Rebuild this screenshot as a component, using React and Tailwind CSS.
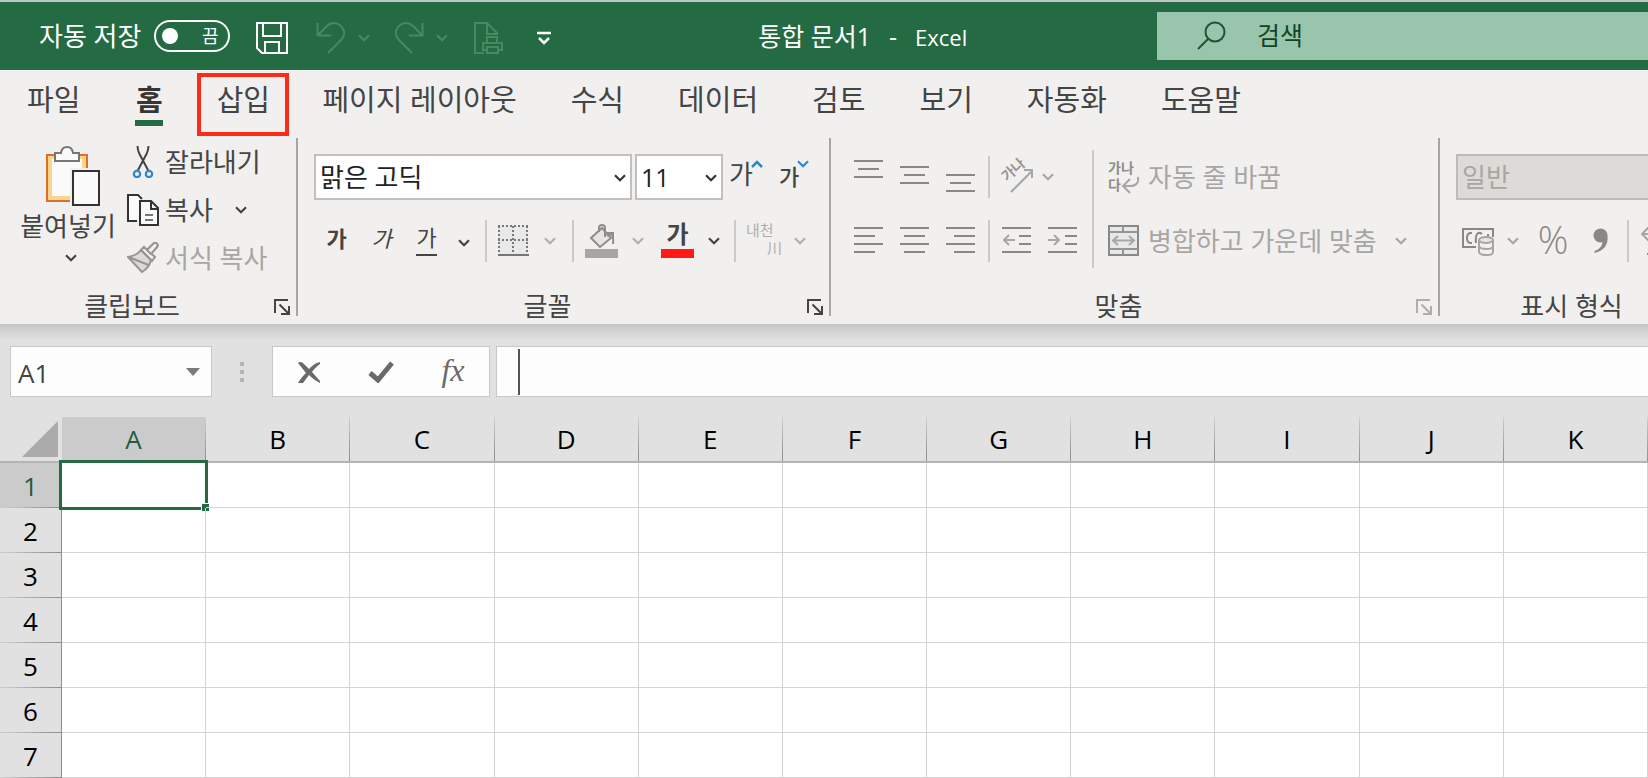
import React from 'react';

const columns = ['A', 'B', 'C', 'D', 'E', 'F', 'G', 'H', 'I', 'J', 'K'];
const rows = [1, 2, 3, 4, 5, 6, 7];
const tabs = ['파일', '홈', '삽입', '페이지 레이아웃', '수식', '데이터', '검토', '보기', '자동화', '도움말'];

const Chevron = ({ className = 'text-[#444]' }) => (
  <svg className={`shrink-0 ${className}`} width="12" height="8" viewBox="0 0 12 8" fill="none" stroke="currentColor" strokeWidth="2.2">
    <path d="M1 1.2l5 5 5-5" />
  </svg>
);

const Separator = ({ className = 'h-[42px]' }) => <span className={`w-0.5 shrink-0 bg-[#cccac8] ${className}`} />;

const Launcher = ({ className = 'text-[#444]', label }) => (
  <button aria-label={label} className={`mr-0.5 flex w-6 shrink-0 justify-center pt-0.5 ${className}`}>
    <svg width="16" height="16" viewBox="0 0 16 16" fill="none" stroke="currentColor" strokeWidth="2">
      <path d="M1 14V1h13M5.500 5.500l9 9M15 7v8H7" />
    </svg>
  </button>
);

const Group = ({ label, className = '', launcher, children }) => (
  <section aria-label={label} className={`flex h-[178px] shrink-0 flex-col border-r-2 border-[#a8a6a4] ${className}`}>
    <div className="flex-1">{children}</div>
    <div className="flex h-5 items-center">
      <span className="flex-1 pr-1.5 text-center leading-5 text-[#444]">{label}</span>
      {launcher}
    </div>
  </section>
);

// Horizontal strokes given as [x, y, length]
const Lines = ({ lines, height = 32, children }) => (
  <svg width="30" height={height} viewBox={`0 0 30 ${height}`} fill="none" stroke="#8a8886" strokeWidth="2">
    {lines.map(([x, y, w]) => (
      <path key={y} d={`M${x} ${y}h${w}`} />
    ))}
    {children}
  </svg>
);

const SaveIcon = () => (
  <svg width="32" height="32" viewBox="0 0 32 32" fill="none" stroke="white" strokeWidth="2">
    <path d="M1 1h30v30H6l-5-5zM7 1v13h18V1M9 31V20h14v11" />
  </svg>
);

const UndoIcon = () => (
  <svg width="30" height="32" viewBox="0 0 30 32" fill="none" stroke="currentColor" strokeWidth="2">
    <path d="M1.500 1v12.500H15M2 13L11 4c5-5 12-3 15 1 3 4 3 9-1 13L12 31" />
  </svg>
);

const RedoIcon = () => (
  <svg width="30" height="32" viewBox="0 0 30 32" fill="none" stroke="currentColor" strokeWidth="2">
    <path d="M28.500 1v12.500H15M28 13L19 4C14-1 7 1 4 5c-3 4-3 9 1 13l13 13" />
  </svg>
);

const PrintPreviewIcon = () => (
  <svg width="30" height="32" viewBox="0 0 30 32" fill="none" stroke="currentColor" strokeWidth="2">
    <path d="M10 31H1V1h12l10 10v2M13 1v11h10M13 21v-6h10v6M13 28H9v-7h19v7h-4M13 25h11v6H13z" />
  </svg>
);

const PasteIcon = () => (
  <svg width="54" height="60" viewBox="0 0 54 60" fill="none">
    <path d="M1 9h40v46H1z" fill="#f8d58c" stroke="#d9712b" strokeWidth="2" />
    <path d="M6 13h30v37H6z" fill="#fafafa" />
    <path d="M9 15V7h6c1-8 11-8 12 0h6v8z" fill="#fafafa" stroke="#767676" strokeWidth="2" />
    <path d="M24 22h30v38H24z" fill="#f1f0ef" />
    <path d="M27 25h26v34H27z" fill="#fafafa" stroke="#333" strokeWidth="2" />
  </svg>
);

const CutIcon = () => (
  <svg width="32" height="32" viewBox="0 0 32 32" fill="none" strokeWidth="2">
    <path d="M10.500 0c0 4 .5 5 2 8l9 17M21.500 0c0 4-.5 5-2 8l-9 17" stroke="#444" />
    <circle cx="10" cy="28" r="3.200" stroke="#2b88c9" strokeWidth="2.200" />
    <circle cx="22" cy="28" r="3.200" stroke="#2b88c9" strokeWidth="2.200" />
  </svg>
);

const CopyIcon = () => (
  <svg width="32" height="32" viewBox="0 0 32 32" fill="none" stroke="#333" strokeWidth="2">
    <path d="M10 27H1V1h10l4 4" fill="#fafafa" />
    <path d="M13 7h11l7 7v17H13z" fill="#fafafa" />
    <path d="M24 7v8h7" />
    <path d="M18 21h8M18 26h8" stroke="#777" />
  </svg>
);

const BrushIcon = () => (
  <svg width="32" height="32" viewBox="0 0 32 32" fill="none" stroke="#979593" strokeWidth="2">
    <path d="M1 15c6-1 10-3 13-7l10 10c-1 5-4 9-9 12z" fill="#dcdad8" />
    <path d="M1.500 15l20 8M14 8l3-3 11 10-3 4zM20 8l7-7c2-1 5 2 3 4l-7 7" />
    <path d="M20 8l7-7c2-1 5 2 3 4l-6 7z" fill="#f1f0ef" />
  </svg>
);

const BorderIcon = () => (
  <svg width="31" height="32" viewBox="0 0 31 32" fill="none" stroke="#777" strokeWidth="2">
    <path d="M1 1h29v29H1z" fill="#e9e9e9" stroke="none" />
    <path d="M0 1h31M0 15h31" strokeDasharray="2 2" />
    <path d="M1 1v27M15 1v27M29 1v27" strokeDasharray="2 2" />
    <path d="M0 30h31" />
  </svg>
);

const FillIcon = () => (
  <svg width="33" height="34" viewBox="0 0 33 34" fill="none" stroke="#8f8d8b" strokeWidth="2">
    <path d="M6 14L17 4l9 10-11 9z" fill="#e6e5e4" />
    <path d="M14 8V4c0-4 6-4 6 0v9M22 12c4-4 7-1 6 8M22 9h6v6" />
    <path d="M0 25h33v9H0z" fill="#a8a6a4" stroke="none" />
  </svg>
);

const OrientationIcon = () => (
  <svg className="overflow-visible" width="34" height="34" viewBox="0 0 34 34" fill="none" stroke="#a8a6a4" strokeWidth="2">
    <text x="0" y="0" transform="translate(7 22) rotate(-42)" fontSize="14" fontWeight="bold" fill="#979593" stroke="none">가나</text>
    <path d="M11 32L32 11M24 10h8v8" />
  </svg>
);

const WrapIcon = () => (
  <svg className="overflow-visible" width="32" height="34" viewBox="0 0 32 34" fill="none" stroke="#a8a6a4" strokeWidth="2">
    <text x="0" y="13" fontSize="14" fontWeight="bold" fill="#8f8d8b" stroke="none">가나</text>
    <text x="0" y="30" fontSize="14" fontWeight="bold" fill="#8f8d8b" stroke="none">다</text>
    <path d="M30 17c1 6-2 9-8 9h-6M22 19l-7 7 7 7" />
  </svg>
);

const MergeIcon = () => (
  <svg width="32" height="32" viewBox="0 0 32 32" fill="none" stroke="#8a8886" strokeWidth="2">
    <path d="M1 1h29v29H1z" fill="#e6e8ea" />
    <path d="M1 7h29M1 24h29M15 1v6M15 24v6" stroke="#979593" />
    <path d="M6 15.500h19M10 11l-5 4.500 5 4.500M21 11l5 4.500-5 4.500" stroke="#a8a6a4" />
  </svg>
);

const CurrencyIcon = () => (
  <svg width="33" height="30" viewBox="0 0 33 30" fill="none" stroke="#8a8886" strokeWidth="2">
    <path d="M14 21H1V3h30v8M10 7H8c-4 1-4 9 0 10h2M20 8c-4-3-7 0-6 9M26 8v3" />
    <path d="M17 14v12c1 4 14 4 14 0V14" fill="#f1f0ef" stroke="#a8a6a4" />
    <ellipse cx="24" cy="14" rx="7" ry="3" fill="#e6e5e4" stroke="#a8a6a4" />
    <path d="M17 20c1 4 14 4 14 0" stroke="#a8a6a4" />
  </svg>
);

const TitleBar = () => (
  <header className="flex h-[70px] items-center overflow-hidden border-t-2 border-[#c3c3c3] bg-[#246a42] text-white">
    <label htmlFor="autosave" className="ml-[39px] shrink-0">자동 저장</label>
    <span className="relative ml-[13px] h-8 w-[76px] shrink-0">
      <input id="autosave" type="checkbox" className="block h-8 w-[76px] appearance-none rounded-full border-2 border-white" />
      <span className="pointer-events-none absolute inset-0 flex items-center justify-between pr-3 pl-2">
        <span className="size-4 rounded-full bg-white" />
        <span className="text-lg leading-5">끔</span>
      </span>
    </span>
    <div className="ml-[26px] flex shrink-0 items-center pt-1 text-[#458a60]">
      <button aria-label="저장"><SaveIcon /></button>
      <button aria-label="실행 취소" className="ml-7 flex items-center gap-3"><UndoIcon /><Chevron className="text-[#458a60]" /></button>
      <button aria-label="다시 실행" className="ml-6 flex items-center gap-3"><RedoIcon /><Chevron className="text-[#458a60]" /></button>
      <button aria-label="인쇄 미리 보기" className="ml-[26px]"><PrintPreviewIcon /></button>
      <button aria-label="빠른 실행 도구 모음 사용자 지정" className="ml-8">
        <svg width="16" height="16" viewBox="0 0 16 16" fill="none" stroke="white" strokeWidth="2.500">
          <path d="M1 3h14M3 8l5 5 5-5" />
        </svg>
      </button>
    </div>
    <h1 className="flex min-w-0 flex-1 items-baseline justify-center gap-[18px] pt-0.5 pl-4 text-[25px] whitespace-nowrap">
      <span>통합 문서1</span>
      <span>-</span>
      <span className="text-[22px]">Excel</span>
    </h1>
    <div className="flex h-12 w-[491px] shrink-0 items-center bg-[#98c5ac] pl-10">
      <svg width="30" height="30" viewBox="0 0 30 30" fill="none" stroke="#1c5434" strokeWidth="2">
        <circle cx="18" cy="11" r="9.500" />
        <path d="M11 18L1 28" />
      </svg>
      <input aria-label="검색" placeholder="검색" className="ml-[30px] min-w-0 flex-1 bg-transparent text-[25px] outline-none placeholder:text-[#0f4526]" />
    </div>
  </header>
);

const Tabs = () => (
  <nav className="flex h-[68px] items-start overflow-hidden pt-[3px] text-[29px] text-[#444]">
    {tabs.map((tab) => {
      if (tab === '홈') {
        return (
          <a key={tab} href="#home" className="flex h-[53px] shrink-0 flex-col items-center px-7 font-bold text-[#3b3535]">
            <span className="h-[47px] leading-[54px]">{tab}</span>
            <span className="h-1.5 w-7 bg-[#246a42]" />
          </a>
        );
      }
      if (tab === '삽입') {
        return (
          <a key={tab} href="#insert" className="mx-1.5 h-[63px] w-[92px] shrink-0 border-4 border-[#ff2b1a] text-center leading-[46px]">{tab}</a>
        );
      }
      return (
        <a key={tab} href="#tab" className="shrink-0 px-[27px] leading-[54px]">{tab}</a>
      );
    })}
  </nav>
);

const ClipboardGroup = () => (
  <Group label="클립보드" className="w-[298px]" launcher={<Launcher label="클립보드 옵션" />}>
    <div className="flex pl-5">
      <button className="flex w-24 flex-col items-center pt-2 text-[#444]">
        <span className="pl-2.5"><PasteIcon /></span>
        <span className="mt-1 leading-8 whitespace-nowrap">붙여넣기</span>
        <span className="mt-3 pl-1.5"><Chevron /></span>
      </button>
      <div className="ml-[11px] flex flex-col gap-1 pt-0.5 text-[#444]">
        <button className="flex h-11 items-center gap-1.5"><CutIcon />잘라내기</button>
        <button className="flex h-11 items-center gap-1.5"><CopyIcon />복사<span className="ml-4"><Chevron /></span></button>
        <button className="flex h-11 items-center gap-1.5 text-[#a8a6a4]"><BrushIcon />서식 복사</button>
      </div>
    </div>
  </Group>
);

const FontGroup = () => (
  <Group label="글꼴" className="w-[533px]" launcher={<Launcher label="글꼴 옵션" />}>
    <div className="flex h-[62px] items-start pt-4 pl-4">
      <span className="relative">
        <select aria-label="글꼴" className="h-[46px] w-[318px] appearance-none border-2 border-[#c2c0be] bg-white pl-1 text-[#222]">
          <option>맑은 고딕</option>
        </select>
        <span className="pointer-events-none absolute top-5 right-1.5"><Chevron className="text-[#333]" /></span>
      </span>
      <span className="relative ml-[3px]">
        <select aria-label="글꼴 크기" className="h-[46px] w-[88px] appearance-none border-2 border-[#c2c0be] bg-white pt-0.5 pl-1 text-[25px] text-[#222]">
          <option>11</option>
        </select>
        <span className="pointer-events-none absolute top-5 right-1.5"><Chevron className="text-[#333]" /></span>
      </span>
      <button aria-label="글꼴 크기 크게" className="ml-1.5 flex items-start pt-1 text-[#444]">
        <span className="leading-8">가</span>
        <svg className="-ml-0.5 mt-0.5" width="12" height="8" viewBox="0 0 12 8" fill="none" stroke="#2b88c9" strokeWidth="2.500"><path d="M1 7l5-5 5 5" /></svg>
      </button>
      <button aria-label="글꼴 크기 작게" className="ml-4 flex items-start pt-1 text-[#444]">
        <span className="text-[22px] leading-9 font-medium">가</span>
        <span className="-ml-0.5 mt-0.5"><Chevron className="text-[#2b88c9]" /></span>
      </button>
    </div>
    <div className="mt-5 flex h-[42px] items-center pl-4 text-[#444]">
      <button className="h-9 w-[45px] pb-1.5 text-[22px] leading-7 font-bold">가</button>
      <button className="h-9 w-[45px] pb-1.5 text-[22px] leading-7 italic">가</button>
      <button className="flex h-9 w-[45px] justify-center text-[22px] leading-7"><span className="h-[33px] border-b-2 border-[#444]">가</span></button>
      <button aria-label="밑줄 옵션" className="mt-1 mr-[15px] ml-[9px]"><Chevron /></button>
      <Separator />
      <button aria-label="테두리" className="mr-4 ml-[11px] flex items-center gap-[15px]"><BorderIcon /><Chevron className="text-[#b0aeac]" /></button>
      <Separator />
      <button aria-label="채우기 색" className="ml-[11px] flex items-center gap-3.5"><FillIcon /><Chevron className="text-[#b0aeac]" /></button>
      <button aria-label="글꼴 색" className="mr-3.5 ml-[17px] flex items-center gap-3.5">
        <span className="flex h-[34px] w-[33px] flex-col items-center justify-between font-bold">
          <span className="h-[25px] text-2xl leading-5">가</span>
          <span className="h-[9px] w-full bg-[#ff1a16]" />
        </span>
        <Chevron />
      </button>
      <Separator />
      <button aria-label="윗주 필드" className="ml-2.5 flex items-center gap-3 text-[15px] leading-[18px] text-[#b0aeac]">
        <span className="flex w-9 flex-col pb-1">
          <span className="text-left whitespace-nowrap">내천</span>
          <span className="text-right">川</span>
        </span>
        <Chevron className="text-[#b0aeac]" />
      </button>
    </div>
  </Group>
);

const AlignmentGroup = () => (
  <Group label="맞춤" className="w-[609px]" launcher={<Launcher label="맞춤 옵션" className="text-[#b0aeac]" />}>
    <div className="flex pt-3 text-[#a8a6a4]">
      <div className="pl-[23px]">
        <div className="mt-1.5 flex h-[42px] items-center">
          <div className="flex gap-4">
            <button aria-label="위쪽 맞춤"><Lines lines={[[0, 1, 29], [4, 9, 21], [0, 17, 29]]} height={34} /></button>
            <button aria-label="가운데 맞춤"><Lines lines={[[0, 7, 29], [4, 15, 21], [0, 23, 29]]} height={34} /></button>
            <button aria-label="아래쪽 맞춤"><Lines lines={[[0, 15, 29], [4, 23, 21], [0, 31, 29]]} height={34} /></button>
          </div>
          <span className="ml-3 flex"><Separator /></span>
          <button aria-label="방향" className="ml-2.5 flex items-center gap-2"><OrientationIcon /><Chevron className="text-[#a8a6a4]" /></button>
        </div>
        <div className="mt-[22px] flex h-[42px] items-center">
          <div className="flex gap-4">
            <button aria-label="왼쪽 맞춤"><Lines lines={[[0, 3, 29], [0, 11, 21], [0, 19, 29], [0, 27, 21]]} /></button>
            <button aria-label="가운데 맞춤"><Lines lines={[[0, 3, 29], [4, 11, 21], [0, 19, 29], [4, 27, 21]]} /></button>
            <button aria-label="오른쪽 맞춤"><Lines lines={[[0, 3, 29], [8, 11, 21], [0, 19, 29], [8, 27, 21]]} /></button>
          </div>
          <span className="ml-3 flex"><Separator /></span>
          <div className="ml-3 flex gap-4">
            <button aria-label="내어쓰기">
              <Lines lines={[[0, 3, 29], [17, 11, 12], [17, 19, 12], [0, 27, 29]]}>
                <path d="M2 15h11M7 10l-5 5 5 5" stroke="#a8a6a4" />
              </Lines>
            </button>
            <button aria-label="들여쓰기">
              <Lines lines={[[0, 3, 29], [17, 11, 12], [17, 19, 12], [0, 27, 29]]}>
                <path d="M0 15h11M6 10l5 5-5 5" stroke="#a8a6a4" />
              </Lines>
            </button>
          </div>
        </div>
      </div>
      <span className="ml-3.5 flex"><Separator className="h-[118px]" /></span>
      <div className="ml-3.5">
        <button className="mt-1.5 flex h-[42px] items-center gap-2 whitespace-nowrap"><WrapIcon />자동 줄 바꿈</button>
        <button className="mt-[22px] flex h-[42px] items-center gap-2 whitespace-nowrap">
          <MergeIcon />병합하고 가운데 맞춤
          <span className="ml-2.5"><Chevron className="text-[#a8a6a4]" /></span>
        </button>
      </div>
    </div>
  </Group>
);

const NumberGroup = () => (
  <Group label="표시 형식" className="w-[297px]" launcher={<Launcher label="표시 형식 옵션" className="text-[#b0aeac]" />}>
    <div className="pt-4 pl-4">
      <select aria-label="표시 형식" disabled className="block h-[46px] w-[260px] appearance-none border-2 border-[#bebcba] bg-[#dedad7] pl-1 text-[#a8a6a4] opacity-100">
        <option>일반</option>
      </select>
    </div>
    <div className="mt-5 flex h-[42px] items-center pl-[22px] text-[#8a8886]">
      <button aria-label="회계 표시 형식" className="flex items-center gap-3"><CurrencyIcon /><Chevron className="text-[#a8a6a4]" /></button>
      <button className="ml-4 w-9 pb-1 text-center font-[Open_Sans] text-[38px] leading-[40px] font-light">%</button>
      <button aria-label="쉼표 스타일" className="mr-[18px] ml-[22px]">
        <svg width="16" height="26" viewBox="0 0 16 26" fill="#8a8886">
          <circle cx="7.500" cy="7.500" r="7" />
          <path d="M14.500 8c1 9-4 15-13 17v-2c6-2 8-6 8-10z" />
        </svg>
      </button>
      <Separator />
      <button aria-label="자릿수 늘림" className="ml-3">
        <svg width="32" height="32" viewBox="0 0 32 32" fill="none" stroke="#a8a6a4" strokeWidth="2">
          <path d="M1 9h14M8 2L1 9l7 7" />
          <ellipse cx="24" cy="9" rx="4" ry="6" />
          <path d="M6 29h3" stroke="#8a8886" />
        </svg>
      </button>
    </div>
  </Group>
);

const FormulaBar = () => (
  <div className="flex h-[93px] items-start bg-[#e1e1e1] bg-linear-to-b from-[#c6c6c6] to-[#e1e1e1] to-[16px] pt-[22px] pl-2.5">
    <div className="flex h-[51px] w-[202px] shrink-0 items-center border border-[#c8c8c8] bg-[#fdfdfd]">
      <input aria-label="이름 상자" defaultValue="A1" className="min-w-0 flex-1 bg-transparent pt-1 pl-[7px] text-[#444] outline-none" />
      <button aria-label="이름 목록" className="mr-[11px]">
        <svg width="14" height="8" viewBox="0 0 14 8" fill="#777b80"><path d="M0 0h14L7 8z" /></svg>
      </button>
    </div>
    <div className="ml-7 flex h-[51px] w-1 shrink-0 flex-col justify-center gap-1">
      <span className="size-1 bg-[#b4b4b4]" />
      <span className="size-1 bg-[#b4b4b4]" />
      <span className="size-1 bg-[#b4b4b4]" />
    </div>
    <div className="ml-7 flex h-[51px] w-[218px] shrink-0 items-center border border-[#c8c8c8] bg-[#fdfdfd] text-[#6a6a6a]">
      <button aria-label="취소" className="flex flex-1 justify-center">
        <svg width="24" height="22" viewBox="0 0 24 22" fill="currentColor">
          <path d="M1 2c2-2 4-1 6 1l5 5c3-3 6-6 11-7v2c-3 2-6 5-8 8l8 9v2c-4-2-8-5-11-8l-6 8c-2 2-4 2-5 0 2-4 5-7 8-10z" />
        </svg>
      </button>
      <button aria-label="입력" className="flex flex-1 justify-center">
        <svg width="26" height="22" viewBox="0 0 26 22" fill="none" stroke="currentColor" strokeWidth="5">
          <path d="M2 12l8 7L24 2" />
        </svg>
      </button>
      <button aria-label="함수 삽입" className="flex-1 pb-1 text-center font-[Liberation_Serif] text-[32px] leading-10 italic">fx</button>
    </div>
    <div className="ml-1.5 flex h-[51px] min-w-0 flex-1 items-center border border-r-0 border-[#c8c8c8] bg-[#fdfdfd] pl-[21px]">
      <span className="h-[46px] w-0.5 shrink-0 bg-[#555]" />
      <input aria-label="수식 입력줄" className="min-w-0 flex-1 bg-transparent outline-none" />
    </div>
  </div>
);

const Sheet = () => (
  <table className="w-full table-fixed border-separate border-spacing-0 bg-white text-black">
    <thead>
      <tr className="h-[46px]">
        <th className="w-[62px] border-b-2 border-[#b4b4b4] bg-[#e1e1e1] p-0">
          <svg className="ml-[22px]" width="37" height="36" viewBox="0 0 37 36" fill="#ababab"><path d="M36 0v36H0z" /></svg>
        </th>
        {columns.map((col) => (
          <th
            key={col}
            scope="col"
            className={`border-b-2 border-[#b4b4b4] p-0 font-normal ${col === 'A' ? 'bg-[#cbcbcb] text-[#1e5e3f]' : 'bg-[#e1e1e1]'}`}
          >
            <div className="flex h-11">
              <span className="flex-1 text-center leading-11">{col}</span>
              <span className="w-px bg-linear-to-b from-[#cfcfcf] to-[#8c8c8c]" />
            </div>
          </th>
        ))}
      </tr>
    </thead>
    <tbody>
      {rows.map((row) => (
        <tr key={row} className="h-[45px]">
          <th scope="row" className={`border-r border-[#8c8c8c] p-0 font-normal ${row === 1 ? 'bg-[#cbcbcb] text-[#1e5e3f]' : 'bg-[#e1e1e1]'}`}>
            <div className="flex h-[45px] flex-col">
              <span className="h-11 leading-[46px]">{row}</span>
              <span className="h-px bg-linear-to-r from-[#cfcfcf] to-[#8c8c8c]" />
            </div>
          </th>
          {columns.map((col) => (
            <td key={col} className="relative border-r border-b border-[#d4d4d4] p-0">
              {row === 1 && col === 'A' && (
                <div className="absolute -inset-[3px] border-3 border-[#246a42]">
                  <span className="absolute -right-1 -bottom-1 size-2 border-t border-l border-white bg-[#246a42]" />
                </div>
              )}
            </td>
          ))}
        </tr>
      ))}
    </tbody>
  </table>
);

export default function App() {
  return (
    <div className="overflow-hidden font-['Open_Sans','Noto_Sans_CJK_KR',sans-serif] text-[26px]">
      <TitleBar />
      <div className="bg-[#f1f0ef]">
        <Tabs />
        <div className="flex overflow-hidden pb-2">
          <ClipboardGroup />
          <FontGroup />
          <AlignmentGroup />
          <NumberGroup />
        </div>
      </div>
      <FormulaBar />
      <Sheet />
    </div>
  );
}
